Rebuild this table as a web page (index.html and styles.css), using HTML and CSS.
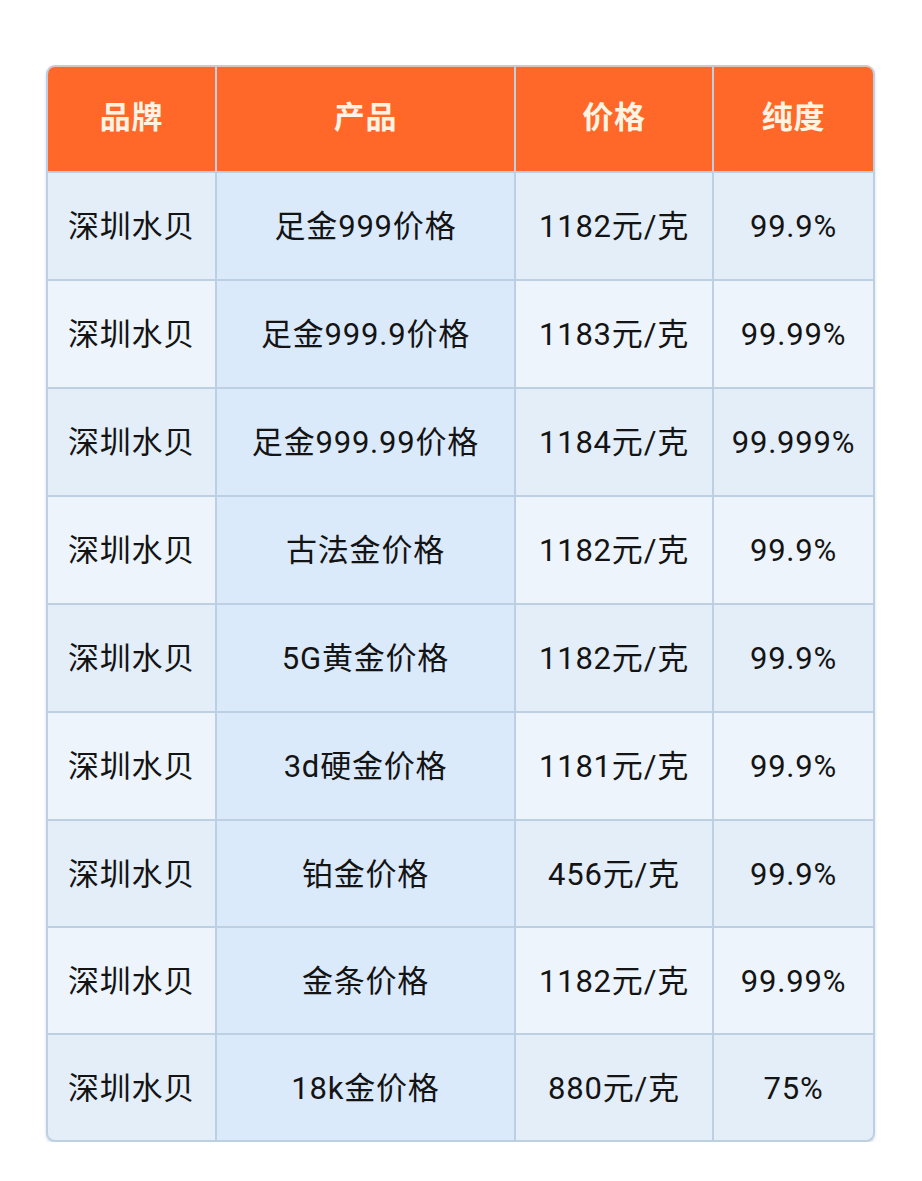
FILE: index.html
```html
<!DOCTYPE html>
<html lang="zh-CN">
<head>
<meta charset="utf-8">
<title>深圳水贝金价</title>
<link rel="stylesheet" href="styles.css">
</head>
<body>
<div class="table">
  <div class="th">品牌</div><div class="th">产品</div><div class="th">价格</div><div class="th">纯度</div>

  <div class="td odd">深圳水贝</div><div class="td prod">足金999价格</div><div class="td odd">1182元/克</div><div class="td odd">99.9%</div>
  <div class="td even">深圳水贝</div><div class="td prod">足金999.9价格</div><div class="td even">1183元/克</div><div class="td even">99.99%</div>
  <div class="td odd">深圳水贝</div><div class="td prod">足金999.99价格</div><div class="td odd">1184元/克</div><div class="td odd">99.999%</div>
  <div class="td even">深圳水贝</div><div class="td prod">古法金价格</div><div class="td even">1182元/克</div><div class="td even">99.9%</div>
  <div class="td odd">深圳水贝</div><div class="td prod">5G黄金价格</div><div class="td odd">1182元/克</div><div class="td odd">99.9%</div>
  <div class="td even">深圳水贝</div><div class="td prod">3d硬金价格</div><div class="td even">1181元/克</div><div class="td even">99.9%</div>
  <div class="td odd">深圳水贝</div><div class="td prod">铂金价格</div><div class="td odd">456元/克</div><div class="td odd">99.9%</div>
  <div class="td even">深圳水贝</div><div class="td prod">金条价格</div><div class="td even">1182元/克</div><div class="td even">99.99%</div>
  <div class="td odd">深圳水贝</div><div class="td prod">18k金价格</div><div class="td odd">880元/克</div><div class="td odd">75%</div>
</div>
</body>
</html>
```
FILE: styles.css
```css
html, body {
  margin: 0;
  padding: 0;
  background: #ffffff;
}
body {
  padding: 65px 0 0 46px;
  font-family: "Roboto", "Noto Sans CJK SC", sans-serif;
}
.table {
  width: 829px;
  box-sizing: border-box;
  display: grid;
  grid-template-columns: 167px 297px 196px 159px;
  grid-template-rows: 104px repeat(6, 106px) repeat(3, 105px);
  gap: 2px;
  background: #bccfe3;
  border: 2px solid #bccfe3;
  border-top-color: #d8c6bc;
  border-radius: 9px;
  overflow: hidden;
  box-shadow: 0 2px 3px rgba(90, 110, 140, 0.25);
}
.th, .td {
  display: flex;
  align-items: center;
  justify-content: center;
  font-size: 31px;
  line-height: 40px;
  letter-spacing: 0.8px;
  white-space: nowrap;
  box-sizing: border-box;
}
.th {
  padding-bottom: 2px;
  background: #ff6828;
  color: #fff4e4;
  font-weight: 700;
}
.td {
  padding-top: 2px;
  color: #141414;
}
.odd { background: #e3eef9; }
.even { background: #edf4fc; }
.prod { background: #dbeafb; }
```
